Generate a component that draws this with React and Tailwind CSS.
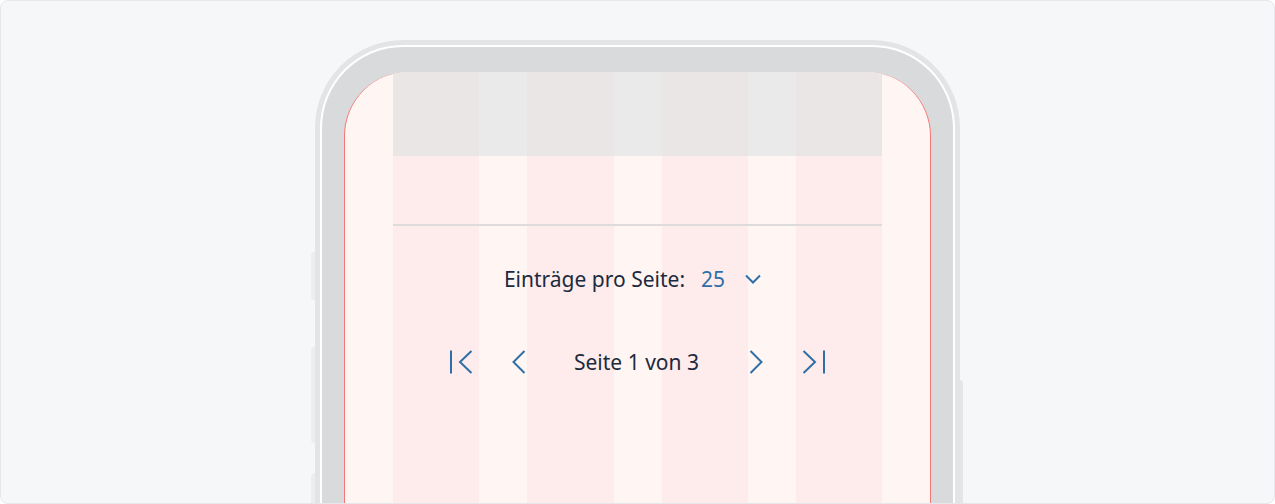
import React from "react";

const FirstIcon = () => (
  <svg width="24" height="24" viewBox="0 0 24 24" fill="none" stroke="currentColor" strokeWidth="2">
    <line x1="1" y1="0.5" x2="1" y2="23.5" />
    <polyline points="21.5,1 10,12 21.5,23" />
  </svg>
);

const PrevIcon = () => (
  <svg width="14" height="24" viewBox="0 0 14 24" fill="none" stroke="currentColor" strokeWidth="2">
    <polyline points="12.5,1 1.5,12 12.5,23" />
  </svg>
);

const NextIcon = () => (
  <svg width="14" height="24" viewBox="0 0 14 24" fill="none" stroke="currentColor" strokeWidth="2">
    <polyline points="1.5,1 12.5,12 1.5,23" />
  </svg>
);

const LastIcon = () => (
  <svg width="24" height="24" viewBox="0 0 24 24" fill="none" stroke="currentColor" strokeWidth="2">
    <polyline points="2.5,1 14,12 2.5,23" />
    <line x1="23" y1="0.5" x2="23" y2="23.5" />
  </svg>
);

const ChevronDown = () => (
  <svg width="16" height="10" viewBox="0 0 16 10" fill="none" stroke="currentColor" strokeWidth="2">
    <polyline points="1,1.5 8,8.5 15,1.5" />
  </svg>
);

export default function App() {
  return (
    <div className="w-[1275px] h-[504px] bg-[#f6f7f9] border border-[#e6e7ea] rounded-lg overflow-hidden flex justify-center pt-[39px] font-['Noto_Sans',sans-serif]">
      <div className="relative w-[645px] h-[540px] shrink-0">
        {/* side buttons */}
        <div className="absolute -left-[4px] top-[212px] w-[5px] h-[48px] rounded-l bg-[#ecedee]" />
        <div className="absolute -left-[4px] top-[307px] w-[5px] h-[96px] rounded-l bg-[#ecedee]" />
        <div className="absolute -left-[4px] top-[433px] w-[5px] h-[96px] rounded-l bg-[#ecedee]" />
        <div className="absolute -right-[3px] top-[340px] w-[4px] h-[140px] rounded-r bg-[#e4e5e6]" />

        <div className="relative h-full rounded-t-[88px] bg-[#e3e4e5] px-[5px] pt-[5px]">
          <div className="h-full rounded-t-[83px] bg-white px-[2px] pt-[2px]">
            <div className="h-full rounded-t-[81px] bg-[#d9dadb] px-[22px] pt-[25px]">
              <div className="relative h-full rounded-t-[64px] overflow-hidden bg-[#fff6f4] border-x border-[#f47676]">
                {/* grid columns */}
                <div className="absolute inset-0 px-[48px] grid grid-cols-4 gap-[48px]">
                  <div className="bg-[#fdeceb]" />
                  <div className="bg-[#fdeceb]" />
                  <div className="bg-[#fdeceb]" />
                  <div className="bg-[#fdeceb]" />
                </div>

                <div className="relative px-[48px] flex flex-col">
                  <div className="h-[84px] bg-[rgba(222,226,227,0.6)]" />
                  <div className="h-[68px]" />
                  <div className="h-[2px] bg-[#dddbdb]" />

                  <div className="mt-[37px] h-[32px] flex items-center justify-center text-[21px] leading-[32px] text-[#1c2a3e]">
                    <span>Einträge pro Seite:</span>
                    <button className="ml-[16px] pr-[10px] flex items-center gap-[20px] text-[#2f6ea6]">
                      <span>25</span>
                      <ChevronDown />
                    </button>
                  </div>

                  <div className="mt-[55px] h-6 flex items-center justify-center text-[#2f6ea6]">
                    <FirstIcon />
                    <span className="w-[38px]" />
                    <PrevIcon />
                    <span className="w-[48px]" />
                    <span className="text-[21px] leading-6 text-[#1c2a3e]">Seite 1 von 3</span>
                    <span className="w-[50px]" />
                    <NextIcon />
                    <span className="w-[38px]" />
                    <LastIcon />
                  </div>
                </div>
              </div>
            </div>
          </div>
        </div>
      </div>
    </div>
  );
}
